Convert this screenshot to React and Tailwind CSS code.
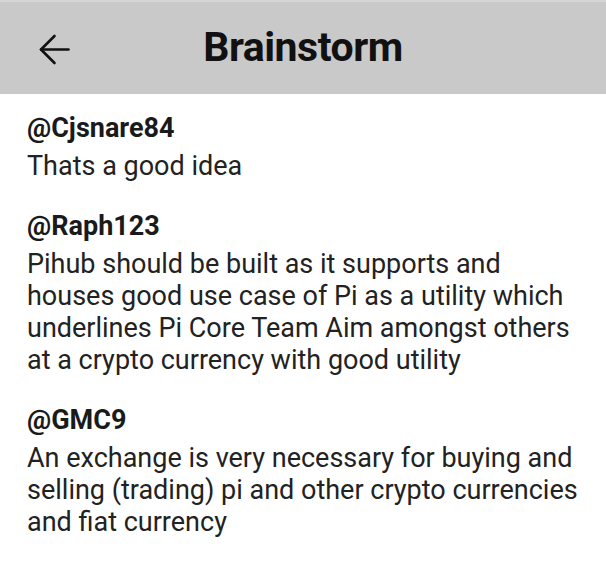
export default function App() {
  const items = [
    { u: "@Cjsnare84", t: "Thats a good idea" },
    {
      u: "@Raph123",
      t: "Pihub should be built as it supports and houses good use case of Pi as a utility which underlines Pi Core Team Aim amongst others at a crypto currency with good utility",
    },
    {
      u: "@GMC9",
      t: "An exchange is very necessary for buying and selling (trading) pi and other crypto currencies and fiat currency",
    },
  ];
  return (
    <div className="w-[606px] h-[565px] bg-white overflow-hidden" style={{ fontFamily: "Roboto, sans-serif" }}>
      <div className="h-[94px] bg-[#c9c9c9] relative flex items-center justify-center border-t-2 border-[#d6d6d6]">
        <svg className="absolute left-[39px] top-[32px]" width="31" height="31" viewBox="0 0 31 31" fill="none" stroke="#111" strokeWidth="2.6" strokeLinecap="round" strokeLinejoin="round">
          <path d="M29.5 15.5H2" />
          <path d="M15.5 2L2 15.5 15.5 29" />
        </svg>
        <div className="text-[41px] font-bold text-[#111] tracking-[-0.5px]">Brainstorm</div>
      </div>
      <div className="pl-[27px] pr-[20px] pt-[18px] flex flex-col gap-[28px]">
        {items.map((it) => (
          <div key={it.u} className="flex flex-col gap-[6px]">
            <div className="text-[27px] leading-[32px] font-bold text-[#1a1a1a]">{it.u}</div>
            <div className="text-[27px] leading-[32px] text-[#222]">{it.t}</div>
          </div>
        ))}
      </div>
    </div>
  );
}
